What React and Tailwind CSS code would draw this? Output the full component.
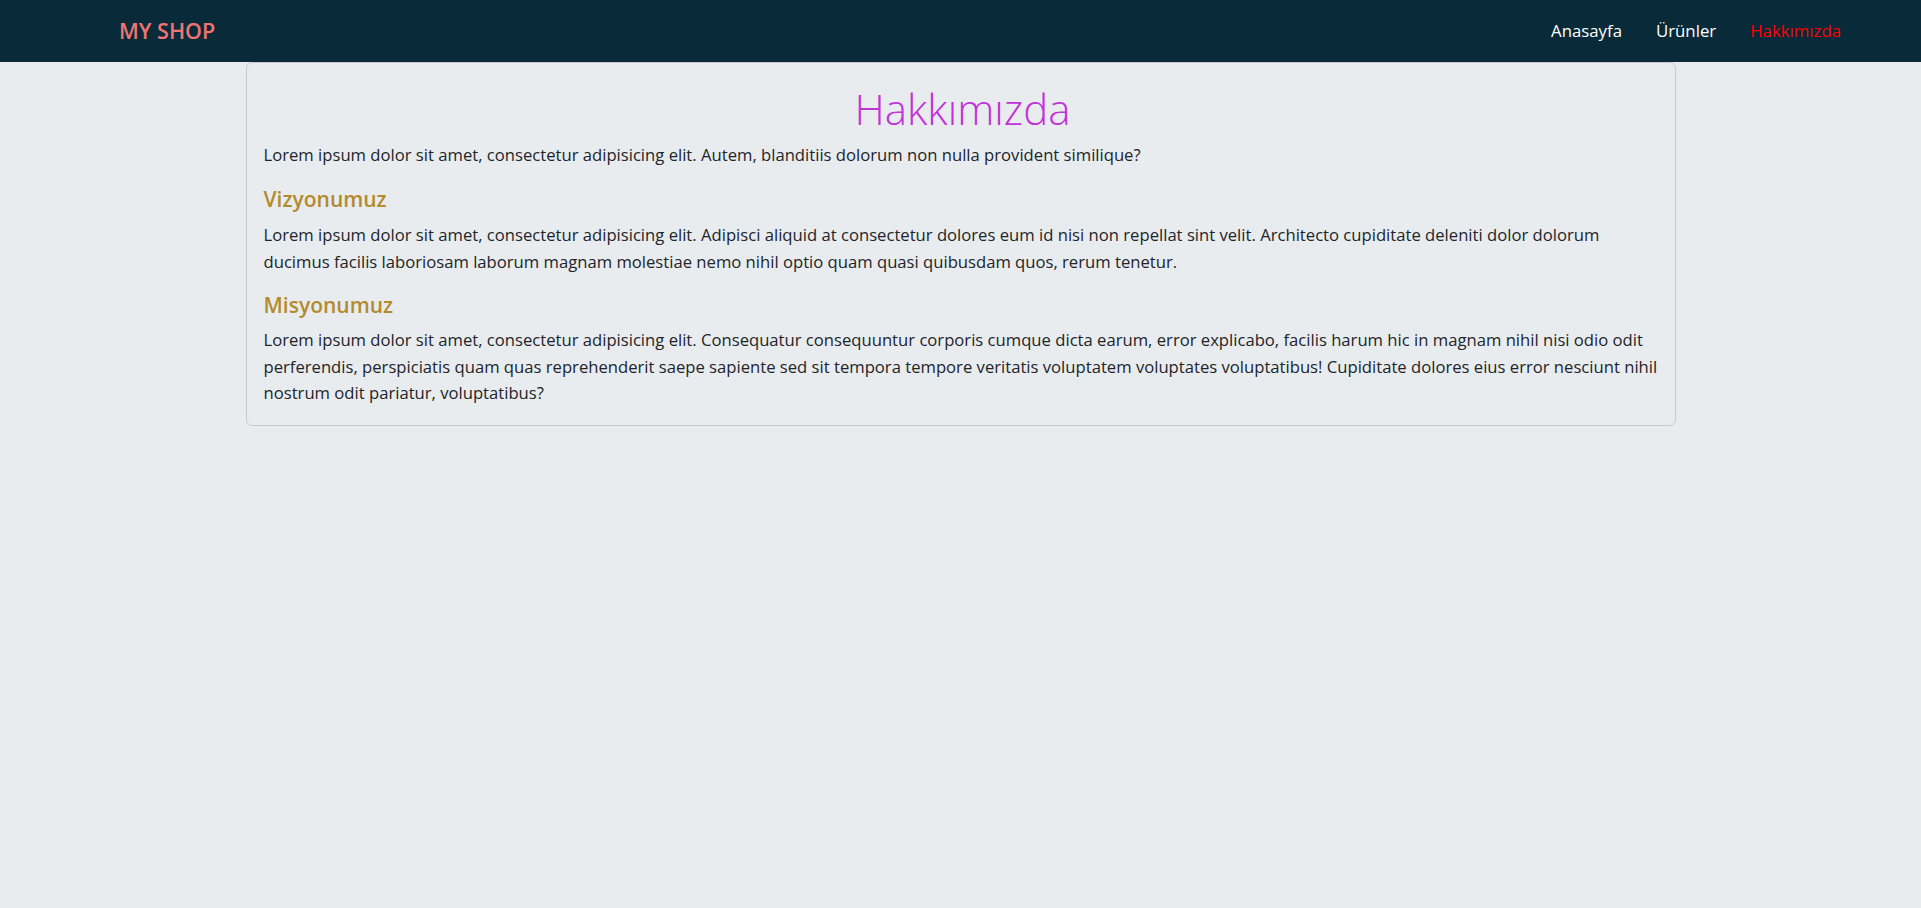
export default function App() {
  const links = [
    { label: "Anasayfa", active: false },
    { label: "Ürünler", active: false },
    { label: "Hakkımızda", active: true },
  ];

  return (
    <div className="min-h-screen bg-[#e9ecef] font-['Segoe_UI','Open_Sans',sans-serif] text-[#212529]">
      <nav className="flex h-[62px] items-center justify-between bg-[#092a38] pl-[119px] pr-[80px]">
        <a href="#" className="text-[21.5px] font-semibold text-[#f07474]">
          MY SHOP
        </a>
        <ul className="flex items-center gap-[34px] text-[16.8px]">
          {links.map((link) => (
            <li key={link.label}>
              <a
                href="#"
                className={link.active ? "text-[#ff0000]" : "text-white"}
              >
                {link.label}
              </a>
            </li>
          ))}
        </ul>
      </nav>

      <main className="mx-auto w-[1430px]">
        <div className="rounded-md border border-[#c6cacf] pb-[18px] pl-[17px] pr-[13px] pt-[21px]">
          <h1 className="text-center text-[42px] font-light leading-[1.2] text-[#c132d8]">
            Hakkımızda
          </h1>
          <p className="mt-[8px] text-[16.65px] leading-[26.5px]">
            Lorem ipsum dolor sit amet, consectetur adipisicing elit. Autem,
            blanditiis dolorum non nulla provident similique?
          </p>

          <h4 className="mt-[18px] text-[21px] font-semibold leading-[1.2] text-[#b38b2c]">
            Vizyonumuz
          </h4>
          <p className="mt-[10px] text-[16.65px] leading-[26.5px]">
            Lorem ipsum dolor sit amet, consectetur adipisicing elit. Adipisci
            aliquid at consectetur dolores eum id nisi non repellat sint velit.
            Architecto cupiditate deleniti dolor dolorum ducimus facilis
            laboriosam laborum magnam molestiae nemo nihil optio quam quasi
            quibusdam quos, rerum tenetur.
          </p>

          <h4 className="mt-[18px] text-[21px] font-semibold leading-[1.2] text-[#b38b2c]">
            Misyonumuz
          </h4>
          <p className="mt-[9px] text-[16.65px] leading-[26.5px]">
            Lorem ipsum dolor sit amet, consectetur adipisicing elit.
            Consequatur consequuntur corporis cumque dicta earum, error
            explicabo, facilis harum hic in magnam nihil nisi odio odit
            perferendis, perspiciatis quam quas reprehenderit saepe sapiente sed
            sit tempora tempore veritatis voluptatem voluptates voluptatibus!
            Cupiditate dolores eius error nesciunt nihil nostrum odit pariatur,
            voluptatibus?
          </p>
        </div>
      </main>
    </div>
  );
}
